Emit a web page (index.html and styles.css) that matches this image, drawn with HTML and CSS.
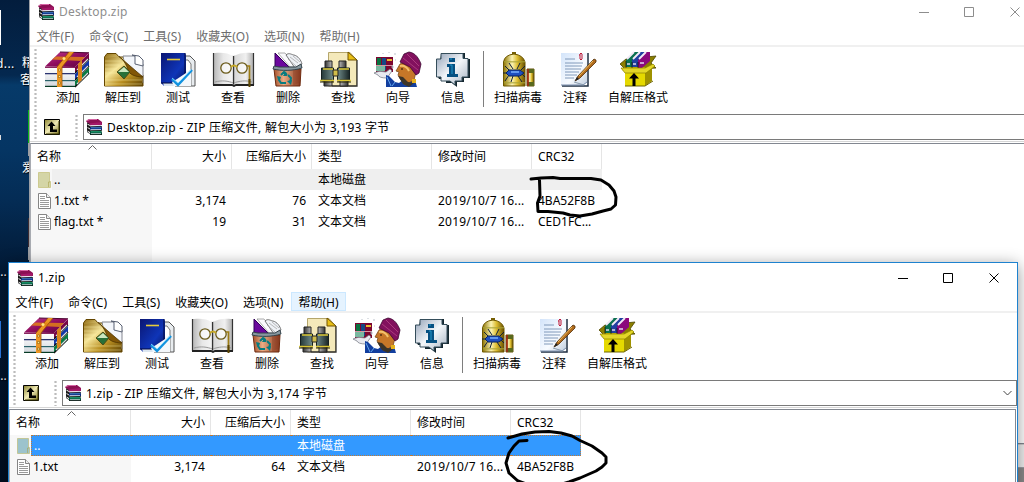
FILE: index.html
```html
<!DOCTYPE html>
<html lang="zh-CN">
<head>
<meta charset="utf-8">
<title>Desktop</title>
<link rel="stylesheet" href="styles.css">
</head>
<body>
<svg class="defs" width="0" height="0">
  <defs>
    <linearGradient id="gold" x1="0" y1="0" x2="1" y2="1"><stop offset="0" stop-color="#8f6a10"/><stop offset=".35" stop-color="#f6e69a"/><stop offset=".65" stop-color="#b98f22"/><stop offset="1" stop-color="#5d4204"/></linearGradient>
    <linearGradient id="plum" x1="0" y1="0" x2="1" y2="1"><stop offset="0" stop-color="#c23a8c"/><stop offset=".5" stop-color="#8e0c5e"/><stop offset="1" stop-color="#5c0540"/></linearGradient>
    <linearGradient id="page" x1="0" y1="0" x2="0" y2="1"><stop offset="0" stop-color="#fff"/><stop offset="1" stop-color="#d4d8de"/></linearGradient>
    <linearGradient id="navy" x1="0" y1="0" x2="1" y2="1"><stop offset="0" stop-color="#0a1672"/><stop offset=".6" stop-color="#0f35b8"/><stop offset="1" stop-color="#071050"/></linearGradient>
    <linearGradient id="sheet" x1="0" y1="0" x2="1" y2="0"><stop offset="0" stop-color="#b4b4b4"/><stop offset=".25" stop-color="#e8e8e8"/><stop offset=".47" stop-color="#f4f4f4"/><stop offset=".5" stop-color="#777"/><stop offset=".54" stop-color="#d8d8d8"/><stop offset=".8" stop-color="#f0f0f0"/><stop offset="1" stop-color="#aaa"/></linearGradient>
    <linearGradient id="copper" x1="0" y1="0" x2="1" y2="0"><stop offset="0" stop-color="#a3512c"/><stop offset=".35" stop-color="#ecac84"/><stop offset="1" stop-color="#84351a"/></linearGradient>
    <linearGradient id="tube" x1="0" y1="0" x2="1" y2="0"><stop offset="0" stop-color="#253838"/><stop offset=".5" stop-color="#7f9c9a"/><stop offset="1" stop-color="#182424"/></linearGradient>
    <linearGradient id="steel" x1="0" y1="0" x2="1" y2="0"><stop offset="0" stop-color="#333"/><stop offset=".5" stop-color="#fff"/><stop offset="1" stop-color="#333"/></linearGradient>
    <linearGradient id="bubble" x1="0" y1="0" x2="1" y2="1"><stop offset="0" stop-color="#94a3b8"/><stop offset=".5" stop-color="#f4f7fa"/><stop offset="1" stop-color="#a5b2c2"/></linearGradient>
    <linearGradient id="can" x1="0" y1="0" x2="1" y2="0"><stop offset="0" stop-color="#8d7300"/><stop offset=".4" stop-color="#fbf3b4"/><stop offset=".65" stop-color="#dcbc30"/><stop offset="1" stop-color="#685000"/></linearGradient>
    <linearGradient id="note" x1="0" y1="0" x2="1" y2="1"><stop offset="0" stop-color="#d3e4fa"/><stop offset=".6" stop-color="#f8fbff"/><stop offset="1" stop-color="#c2cfdf"/></linearGradient>
    <linearGradient id="key" x1="0" y1="0" x2="1" y2="1"><stop offset="0" stop-color="#8a8330"/><stop offset=".5" stop-color="#efe9b4"/><stop offset="1" stop-color="#77701c"/></linearGradient>
  </defs>

  <symbol id="i-books" viewBox="0 0 16 16">
    <path d="M0 2 3 0h9l4 3v3H3z" fill="#8c1054"/><path d="M1 1.500 4 .5h7" stroke="#d766a5" fill="none"/>
    <path d="M3 4.500 15.500 3v3L4 6.500z" fill="#a31868"/>
    <path d="M1 3.500 4 5v10l-3-2z" fill="#1a1a1a"/><path d="M1.500 4.500 4 6v1L1.500 5.700zM1.500 8 4 9.500v1L1.500 9zM1.500 11.500 4 13v1.500l-2.500-2z" fill="#e8e8e8"/>
    <path d="M4 8 15 6.500 16 9v2H4z" fill="#0b2d80"/><path d="M5 8.700h10" stroke="#4b8ddd"/>
    <path d="M4 12 15 11l1 2.500V16H4z" fill="#05533c"/><path d="M5 12.800h10" stroke="#23b880"/>
    <path d="M4.500 6.800H15M4.500 10.700H15M5 14.800h10" stroke="#e9edf0" stroke-width=".9"/>
    <path d="M4 7.700h12M4 11.600h12M4 15.600h12" stroke="#111" stroke-width=".8"/>
  </symbol>
  <symbol id="i-up" viewBox="0 0 16 16">
    <path d="M.5.5h15v15H.5z" fill="url(#key)" stroke="#000"/><path d="M15 2v13H2" fill="none" stroke="#3b3700"/>
    <path d="M7.500 2.500 11.500 7H9v3.500h4V13H6V7H3.500z"/>
  </symbol>
  <symbol id="i-file" viewBox="0 0 13 16">
    <path d="M.5.5h8l4 4v11H.5z" fill="#fff" stroke="#858585"/><path d="M8.500.5v4h4" fill="#eee" stroke="#858585"/>
    <path d="M2 3.500h5M2 5.500h5M2 7.500h9M2 9.500h9M2 11.500h9M2 13.500h9" stroke="#9a9a9a"/>
  </symbol>
  <symbol id="i-folder" viewBox="0 0 13 16">
    <path d="M.5.5h11v9h1v6H.5z" fill="currentColor" stroke="#b9b25c" stroke-opacity=".55"/><path d="M10.500 15V10h1.500" fill="none" stroke="#aaa34e" stroke-opacity=".6"/>
  </symbol>

  <symbol id="i-add" viewBox="0 0 48 37">
    <path d="M31 16 45 2v6L31 22z" fill="#760747"/><path d="M31 23 45 9v6L31 29z" fill="#1237a8"/><path d="M31 30 45 16v7L31 36z" fill="#0b7a43"/>
    <path d="M31 22 45 8M31 29 45 15M31 36 45 22" stroke="#111" stroke-width="1.300"/>
    <path d="M33 19 44 8M33 26 44 15M33 33 44 22" stroke="#d7dce2" stroke-width="1.200"/>
    <path d="M1 15.500 16 1l29 .8L31 16z" fill="url(#plum)"/><path d="m16 1 29 .8" stroke="#4c0833"/>
    <path d="M1 17h30v5H1zM1 24h30v5H1zM1 31h30v4H1z" fill="url(#page)"/>
    <path d="M1 16.300h30" stroke="#7b0d4e" stroke-width="1.200"/><path d="M1 22.700h30" stroke="#121c60" stroke-width="1.200"/><path d="M1 29.700h30" stroke="#115058" stroke-width="1.200"/><path d="M1 35.400h30" stroke="#063c25" stroke-width="1.200"/>
    <path d="M13 16 25 1h5L18 16v20h-5z" fill="#ec9624"/><path d="M8 8.500 12 5.500l29 .5-4 4z" fill="#e08018" opacity=".85"/>
    <path d="M13 16 25 1M18 16 30 1M18 16v20" stroke="#9a5200" fill="none" stroke-width=".8"/>
    <path d="M34 13v19l4-3V9z" fill="#d9831b"/><circle cx="20" cy="7.500" r="1.500" fill="#ffe680"/><path d="M14.500 18h2v2h-2zM14.500 24.500h2v2h-2zM14.500 31h2v2h-2z" fill="#ffe88a" stroke="#7a4c00" stroke-width=".5"/>
  </symbol>
  <symbol id="i-extract" viewBox="0 0 48 37">
    <path d="M5.500 35V6L8 2.500h9L20 6h8l16 18v11z" fill="url(#gold)" stroke="#644600"/>
    <path d="M24 5h12l8 8v19L25 10z" fill="#f3f6fb" stroke="#83858e"/><path d="m33 4 3 1v8l8 2V9l-4-4z" fill="#fff" stroke="#596173"/>
    <path d="M19 5.500C31 9 29 23 44 25L43.500 35H6V7z" fill="url(#gold)"/><path d="M20 5.500 44 26c-8 0-14-3-15-7S25 9 20 5.500" fill="#815607" stroke="#4e3300" stroke-width=".8"/>
    <path d="M6 10h16M6 14h14M6 18h12M6 22h12M6 29h37M6 33h37" stroke="#fff6b0" stroke-opacity=".4"/>
    <path d="m18 21 7-6 6 6-6 7z" fill="#287038" stroke="#4c4e17"/><path d="m19 21 6-5 5 5z" fill="#cbe6be"/>
  </symbol>
  <symbol id="i-test" viewBox="0 0 48 37">
    <path d="M27 5h9l5 5v25H21V9z" fill="#e8ecef" stroke="#555"/><path d="M29 9h5l3 4v22" fill="#fff" stroke="#777"/>
    <path d="M7 2h24l1 2v31H10l-3-3z" fill="url(#navy)"/><path d="M31 2v22" stroke="#02093c"/><path d="M9 32h12v3H10z" fill="#dce6f0"/><path d="M7 32h13" stroke="#03093c"/>
    <path d="M13 8.500h13" stroke="#e6cb3b" stroke-width="1.600"/>
    <path d="m32 22 5-4v17H20l-2-4 5-3z" fill="#f3f7fb"/><path d="m18 28 6 6 14-15" fill="none" stroke="#1192df" stroke-width="2.500"/><path d="m18 27 6 5 13-13" fill="none" stroke="#8edaff" stroke-width=".8"/>
  </symbol>
  <symbol id="i-view" viewBox="0 0 48 37">
    <path d="M4 2h2c7-1 13 0 18.500 3C30 2 37 1 43 2h2v32H27l-2 1-2-1H4z" fill="url(#sheet)"/><path d="M4.500 2v32M44.500 2v32" stroke="#333" stroke-width="1.200"/>
    <path d="M4 34h19l2 1 2-1h18" fill="none" stroke="#222" stroke-width="1.800"/><path d="M6 31c7-2 13-1 18.500 1 6-2 12-3 18.500-1" fill="none" stroke="#999"/>
    <path d="M24.500 5v28" stroke="#333"/><g fill="#fff" fill-opacity=".6" stroke="#6a5a19" stroke-width="1.300"><circle cx="17" cy="17" r="5.200"/><circle cx="33" cy="17" r="5.200"/></g>
    <path d="M22 16q3-3 6 0" fill="none" stroke="#c8aa27" stroke-width="2"/><path d="M38 15h2.500v18" fill="none" stroke="#9d7c15" stroke-width="1.700"/><path d="M39.500 28h2v8h-2z" fill="#5c4604"/>
  </symbol>
  <symbol id="i-delete" viewBox="0 0 48 37">
    <path d="M11 16V2l15 15z" fill="#6b089d" stroke="#310057"/><path d="m14 2 7 0 12 14H26z" fill="#f9f9fc" stroke="#777" stroke-width=".6"/><path d="M22 4c3-3 6 0 8 0 4 1 7 5 8 9l-7 4z" fill="#eef1f6" stroke="#555" stroke-width=".8"/><path d="m26 6 8 6M24 8l8 7M29 5l7 6" stroke="#aaa" stroke-width=".8"/>
    <path d="M10 18h27l-1 17H12z" fill="url(#copper)" stroke="#6c2b10"/><path d="M10 15 9 18c8 2 20 2 29-1l-1-4-5 3H15z" fill="#87979f" stroke="#34434b"/>
    <path d="M29 19h8l-1 12-7 4z" fill="#893d22" opacity=".4"/>
    <g fill="none" stroke="#087c80" stroke-width="2"><path d="m17 24 3-3 3 3M24 24l3 3-1 5M22 32h-5l-2-3 1-3"/></g><path d="m22 20 1 5h-4zM28 29l-5 1 4 4zM13 25l4 1-3 3z" fill="#087c80"/>
  </symbol>
  <symbol id="i-find" viewBox="0 0 48 37">
    <path d="M9.500 1.500H31L37.500 9v26h-28z" fill="#f4e9ba" stroke="#b5a66c"/><path d="M38 9v26H13" fill="none" stroke="#333" stroke-width="1.300"/><path d="M29 1v8h9z" fill="#e8bf16" stroke="#725500"/>
    <path d="M6 10h7v7H6zM20 10h7v7h-7z" fill="url(#steel)" stroke="#222"/><path d="M2.500 17h12v13h-12zM18.500 17h12v13h-12z" fill="url(#tube)" stroke="#152020"/>
    <path d="M14 19h5v6h-5z" fill="#d0bd49" stroke="#222"/><path d="M5 29h8v6H5zM21 29h8v6h-8z" fill="url(#steel)" stroke="#222"/><path d="M1 29.500h14M18 29.500h14M4 18h10M20 18h10" stroke="#dac634" stroke-width="1.300"/><path d="M1 31h14M18 31h14" stroke="#252000"/>
  </symbol>
  <symbol id="i-guide" viewBox="0 0 48 37">
    <path d="M2 6h17v15H2z" fill="#7c0630"/><path d="M3 7h4v12H3z" fill="#0a7340"/><path d="M8 7h4v12H8z" fill="#144884"/><path d="M2 15h9v5H2z" fill="#7ab8a0"/><path d="M13 8h5v2h-5z" fill="#e8bf30"/><path d="M2 14.500h17" stroke="#d497a4"/>
    <path d="M0 22q5-3 12-1l4-3 2 2-5 7q-8 0-9-3l-4-2z" fill="#e9eaf0" stroke="#70747e" stroke-width=".7"/>
    <path d="m12 24 3 1 6 6 4 1 5-4 11 1 2 7H12z" fill="#123e9e"/><path d="m13 26 4 9M21 31l-3 4" stroke="#62a7ef"/>
    <path d="m26 13-4 7 3 1-1 3 3 5 4 5 9-5 3-12-9-8z" fill="#c67728" stroke="#7b4b1c" stroke-width=".8"/><path d="m24 25 5 1 5 5 6 1-5 4-6-3z" fill="#3b3428"/><path d="M26 15q6-1 9 5" fill="none" stroke="#f2c16b" stroke-width="2"/><circle cx="28" cy="18" r=".8"/><path d="M38 28h4v4h-4z" fill="#e5b21c"/>
    <path d="M26 11 30 3l5-2c7 1 10 7 12 12l-2 9-3 2-6-8z" fill="#82115e" stroke="#3b0630" stroke-width=".8"/><path d="m29 7 15 12M33 3l12 12" stroke="#ab3c7e"/>
    <path d="M9 2v1M15 1v1M21 2v2M17 16h3M18.500 14v4M21 9h1" stroke="#aab1bc" stroke-width=".8"/>
  </symbol>
  <symbol id="i-info" viewBox="0 0 48 37">
    <path d="m12 4 3-2h21v6h5v19h-6v4h-7v5l-5-4H17v-4h-7l-2-4z" fill="#14262e"/>
    <path d="M12 2.500h22v5h5V26h-6v4h-7v4l-5-4h-9v-4H7.500V8H12z" fill="url(#bubble)" stroke="#344d5a"/>
    <path d="M20 7h6v4h-6zM18 13h8v10h3v3H18v-3h2v-7h-2z" fill="#075182"/><path d="M21 8h2M21 14h2v9" fill="none" stroke="#2398ca"/>
  </symbol>
  <symbol id="i-virus" viewBox="0 0 48 37">
    <path d="M18 1h4v3h-4z" fill="#776004"/><path d="M9.500 11q1-7 10.500-8 9 1 11 8v24h-21.500z" fill="url(#can)" stroke="#6d5700"/><path d="M10 10h21v1.500H10zM10 31h21v1.500H10z" fill="#a8a438" opacity=".7"/>
    <g fill="none" stroke="#10203c"><path d="m15 19-4-4M19 18l-4-6M23 18l3-6M27 19l4-4M15 24l-4 6M19 25l-2 6M24 25l4 6M27 22l4 4M12 22H9"/></g><path d="m12 22 3-3h11l4 3-4 3H15z" fill="#1d4ec0" stroke="#09235e"/><path d="M17 21h8" stroke="#79b1ff" stroke-width="1.500"/>
    <path d="M33 18h7v17h-7z" fill="url(#can)" stroke="#665108"/><path d="M33 18h7v4h-7zM33 31h7v4h-7z" fill="#59691d"/><path d="M34 18v17" stroke="#a62010" stroke-width="1.500"/>
  </symbol>
  <symbol id="i-note" viewBox="0 0 48 37">
    <path d="M37 2v33H11" fill="none" stroke="#1e2e42" stroke-width="1.500"/><path d="M10 2h26v29l-3 3H10z" fill="url(#note)"/><path d="M10 34h22l4-3" fill="none" stroke="#7b8fae"/>
    <path d="M14 8h10M14 12h18M14 15h17M14 18h16M14 21h14M14 24h12M14 27h9" stroke="#758fb2" stroke-width=".9"/><path d="M31 8V3q-1-2-2 0v5q1 2 2 0M29 4h-1" fill="none" stroke="#bd1635"/>
    <path d="m24 30 3-5L43 8l2 1v2L29 27z" fill="#b16b1d" stroke="#512e08" stroke-width=".8"/><path d="m28 25 14-15" stroke="#f1bd5b"/><path d="m24 30 2-4 2 2z" fill="#222"/><path d="m23 31 10 3" stroke="#889bae"/>
  </symbol>
  <symbol id="i-sfx" viewBox="0 0 48 37">
    <path d="m6 13 6-5 30-3-5 7 5 5-30 2z" fill="#8b7f00" stroke="#4c4500" stroke-width=".8"/><path d="m8 19 3-3h20l-2 5H13z" fill="#c9b900"/>
    <path d="m12 9 8-8h5l-7 15h-6z" fill="#0a7050"/><path d="m18 9 8-8h5l-6 15h-7z" fill="#2040a0"/><path d="m24 9 8-8h4v9l-8 7h-4z" fill="#8b087d"/><path d="m13 8 7-7M19 8l7-7M25 8l7-7" stroke="#f2e9f6" stroke-width="1.800"/><path d="M13 13h3M19 13h3M26 12h4" stroke="#ded6ee" stroke-width="1.500"/><path d="M12 17V10M18 17v-6M24 17v-6" stroke="#111" stroke-width=".8"/>
    <path d="M11 18h20v17H11z" fill="#e5d900"/><path d="m31 18 7-4v16l-7 5z" fill="#9f9200"/><path d="M7 17h24l8-4 2 2-9 7H11z" fill="#e3d728" stroke="#8a8000" stroke-width=".7"/><path d="M11 35h20l8-5" fill="none" stroke="#6d6500"/>
    <path d="m20 22 5 5.500h-3.500V35h-3v-7.500H15z"/>
  </symbol>
</svg>

<main class="desktop">
  <div class="wallpaper">
    <i class="bit bit-white"></i><i class="bit bit-dot"></i><i class="bit bit-green"></i><i class="bit bit-gray"></i><i class="bit bit-brown"></i><i class="bit bit-gray2"></i><i class="bit bit-blue"></i>
    <span class="cap cap-d">d...</span><span class="cap cap-a">精</span><span class="cap cap-b">客</span><span class="cap cap-c">爱</span><span class="cap cap-e">...</span><span class="cap cap-f">...</span>
  </div>

  <section class="window back">
    <header class="titlebar">
      <svg class="i16"><use href="#i-books"/></svg><span class="title">Desktop.zip</span>
      <svg class="controls" viewBox="0 0 110 12"><path d="M0 6.500h10M45.500 1.500h9v9h-9zM91.500 1.500l9 9M100.500 1.500l-9 9"/></svg>
    </header>
    <nav class="menu"><span>文件(F)</span><span>命令(C)</span><span>工具(S)</span><span>收藏夹(O)</span><span>选项(N)</span><span>帮助(H)</span></nav>
    <div class="bars">
      <div class="toolbar">
        <div class="tool"><svg><use href="#i-add"/></svg>添加</div>
        <div class="tool"><svg><use href="#i-extract"/></svg>解压到</div>
        <div class="tool"><svg><use href="#i-test"/></svg>测试</div>
        <div class="tool"><svg><use href="#i-view"/></svg>查看</div>
        <div class="tool"><svg><use href="#i-delete"/></svg>删除</div>
        <div class="tool"><svg><use href="#i-find"/></svg>查找</div>
        <div class="tool"><svg><use href="#i-guide"/></svg>向导</div>
        <div class="tool"><svg><use href="#i-info"/></svg>信息</div>
        <div class="divider"></div>
        <div class="tool w60"><svg><use href="#i-virus"/></svg>扫描病毒</div>
        <div class="tool w54"><svg><use href="#i-note"/></svg>注释</div>
        <div class="tool w72"><svg><use href="#i-sfx"/></svg>自解压格式</div>
      </div>
      <div class="address">
        <svg class="i16"><use href="#i-up"/></svg><i class="grip"></i>
        <div class="path"><svg class="i16"><use href="#i-books"/></svg><span>Desktop.zip - ZIP 压缩文件, 解包大小为 3,193 字节</span></div>
      </div>
    </div>
    <div class="list">
      <div class="row head"><span>名称<svg class="sort" viewBox="0 0 9 5"><path d="m.5 4.500 4-4 4 4"/></svg></span><span class="r">大小</span><span class="r">压缩后大小</span><span>类型</span><span>修改时间</span><span>CRC32</span></div>
      <div class="row parent"><span class="name"><svg class="fi"><use href="#i-folder"/></svg><b>..</b></span><span></span><span></span><span>本地磁盘</span><span></span><span></span></div>
      <div class="row"><span class="name"><svg class="fi"><use href="#i-file"/></svg><b>1.txt *</b></span><span class="r">3,174</span><span class="r">76</span><span>文本文档</span><span class="date">2019/10/7 16...</span><span class="crc">4BA52F8B</span></div>
      <div class="row"><span class="name"><svg class="fi"><use href="#i-file"/></svg><b>flag.txt *</b></span><span class="r">19</span><span class="r">31</span><span>文本文档</span><span class="date">2019/10/7 16...</span><span class="crc">CED1FC...</span></div>
      <div class="fill"></div>
    </div>
    <footer class="status"></footer>
  </section>

  <section class="window front">
    <header class="titlebar">
      <svg class="i16"><use href="#i-books"/></svg><span class="title">1.zip</span>
      <svg class="controls" viewBox="0 0 110 12"><path d="M0 6.500h10M45.500 1.500h9v9h-9zM91.500 1.500l9 9M100.500 1.500l-9 9"/></svg>
    </header>
    <nav class="menu"><span>文件(F)</span><span>命令(C)</span><span>工具(S)</span><span>收藏夹(O)</span><span>选项(N)</span><span class="hot">帮助(H)</span></nav>
    <div class="bars">
      <div class="toolbar">
        <div class="tool"><svg><use href="#i-add"/></svg>添加</div>
        <div class="tool"><svg><use href="#i-extract"/></svg>解压到</div>
        <div class="tool"><svg><use href="#i-test"/></svg>测试</div>
        <div class="tool"><svg><use href="#i-view"/></svg>查看</div>
        <div class="tool"><svg><use href="#i-delete"/></svg>删除</div>
        <div class="tool"><svg><use href="#i-find"/></svg>查找</div>
        <div class="tool"><svg><use href="#i-guide"/></svg>向导</div>
        <div class="tool"><svg><use href="#i-info"/></svg>信息</div>
        <div class="divider"></div>
        <div class="tool w60"><svg><use href="#i-virus"/></svg>扫描病毒</div>
        <div class="tool w54"><svg><use href="#i-note"/></svg>注释</div>
        <div class="tool w72"><svg><use href="#i-sfx"/></svg>自解压格式</div>
      </div>
      <div class="address">
        <svg class="i16"><use href="#i-up"/></svg><i class="grip"></i>
        <div class="path"><svg class="i16"><use href="#i-books"/></svg><span>1.zip - ZIP 压缩文件, 解包大小为 3,174 字节</span><svg class="drop" viewBox="0 0 9 6"><path d="m.5 1 4 4 4-4"/></svg></div>
      </div>
    </div>
    <div class="list">
      <div class="row head"><span>名称<svg class="sort" viewBox="0 0 9 5"><path d="m.5 4.500 4-4 4 4"/></svg></span><span class="r">大小</span><span class="r">压缩后大小</span><span>类型</span><span>修改时间</span><span>CRC32</span></div>
      <div class="row parent selected"><span class="name"><svg class="fi"><use href="#i-folder"/></svg><b>..</b></span><span></span><span></span><span>本地磁盘</span><span></span><span></span></div>
      <div class="row"><span class="name"><svg class="fi"><use href="#i-file"/></svg><b>1.txt</b></span><span class="r">3,174</span><span class="r">64</span><span>文本文档</span><span class="date">2019/10/7 16...</span><span class="crc">4BA52F8B</span></div>
      <div class="fill"></div>
    </div>
    <footer class="status"></footer>
  </section>

  <svg class="ink" viewBox="0 0 1024 482">
    <path d="M531 179 541 178 553 177.500 560 178.500H591L601 180 609 185 614 191 616 197 615.500 205 611 209 603 211 592 214 580 216 570 215 563 213 548 211.500 538 211.500 537.500 203 540 196 539.500 180"/>
    <path d="M527 440.500 519 441 514 446 509 453 506 463 509 473 518 481 532 486H555L569 482 580 478 596 471 602 467 606 463 606 457 602 453 592 446 580 440.500 572 436 561 433 549 431.500 535 432 522 434 508 438"/>
  </svg>
</main>
</body>
</html>
```
FILE: styles.css
```css
* { box-sizing: border-box; }
body { margin: 0; font: 12px/16px "Noto Sans", "Noto Sans CJK SC", sans-serif; color: #000; }
svg { display: block; flex: none; }
.defs { position: absolute; }
.desktop { position: relative; width: 1024px; height: 482px; overflow: hidden; background: #8b8b8b; }

.wallpaper { position: absolute; left: 0; top: 0; width: 31px; height: 482px; overflow: hidden; background: linear-gradient(#031d3d 0, #04284f 75px, #063a69 85px, #053563 150px, #042c55 200px, #021a36 270px, #010e20 482px); }
.bit { position: absolute; }
.bit-white { left: 0; top: 10px; width: 1px; height: 35px; background: #fff; }
.bit-dot { left: 0; top: 135px; width: 1px; height: 5px; background: #ddd; }
.bit-green { left: 28px; top: 110px; width: 2px; height: 33px; background: #0ab414; }
.bit-gray { left: 28px; top: 143px; width: 2px; height: 13px; background: #9b9da0; }
.bit-brown { left: 28px; top: 218px; width: 2px; height: 29px; background: #3d2c32; }
.bit-gray2 { left: 28px; top: 247px; width: 2px; height: 13px; background: #9b9da0; }
.bit-blue { left: 0; top: 321px; width: 1px; height: 37px; background: #2a7be8; }
.cap { position: absolute; color: #fff; line-height: 16px; text-shadow: 1px 1px 1px #000; }
.cap-d { left: -4px; top: 56px; letter-spacing: .4px; }
.cap-a { left: 22px; top: 55px; }
.cap-b { left: 20px; top: 72px; }
.cap-c { left: 22px; top: 160px; }
.cap-e, .cap-f { left: -3px; top: 264px; }
.cap-f { top: 368px; }

.window { position: absolute; width: 1010px; height: 472px; display: flex; flex-direction: column; background: #fff; border: 1px solid; }
.back { left: 29px; top: -4px; border-color: #9c9fa5; }
.front { left: 8px; top: 262px; border-color: #1e82cf; box-shadow: 0 3px 15px rgba(0, 0, 0, .42); }

.titlebar { height: 29px; display: flex; align-items: center; padding-left: 8px; }
.i16 { width: 16px; height: 16px; }
.title { margin-left: 5px; letter-spacing: .25px; }
.controls { width: 110px; height: 12px; margin-left: auto; margin-right: 9px; fill: none; stroke: #000; }
.back .controls { stroke: #8d8d8d; }
.back .title { color: #8e8e8e; }
.menu { height: 19px; display: flex; align-items: center; margin-left: -1px; }
.menu span { height: 19px; line-height: 19px; padding: 0 6.600px; border: 1px solid transparent; white-space: nowrap; }
.back .menu { color: #6d6d6d; }
.menu .hot { background: #e5f3ff; border-color: #cce8ff; }

.bars { position: relative; border-top: 2px solid #f0f0f0; height: 97px; display: flex; flex-direction: column; border-bottom: 1px solid #d6d6d6; }
.bars::before, .grip { background: radial-gradient(circle, #bcbcbc 1px, transparent 1.300px) 0 0 / 3px 4px; }
.bars::before { content: ""; position: absolute; left: 4px; top: 1px; width: 3px; height: 92px; }
.toolbar { height: 66px; display: flex; padding: 4px 0 0 10.500px; }
.tool { width: 55px; display: flex; flex-direction: column; align-items: center; line-height: 20px; white-space: nowrap; }
.tool svg { width: 48px; height: 37px; }
.w60 { width: 60px; }
.w54 { width: 54px; }
.w72 { width: 72px; }
.divider { width: 1px; height: 56px; background: #7e7e7e; margin: 0 4px 0 2.500px; }
.address { display: flex; align-items: center; height: 28px; padding-left: 14px; }
.grip { width: 3px; height: 26px; margin: 0 5px 0 15px; }
.path { flex: 1; height: 26px; border: 1px solid #7a7a7a; display: flex; align-items: center; padding: 0 4px 0 2px; }
.path span { margin-left: 5px; padding-top: 1px; flex: 1; letter-spacing: .26px; white-space: nowrap; }
.drop { width: 9px; height: 6px; fill: none; stroke: #444; }

.list { flex: 1; display: flex; flex-direction: column; margin: 1px 1px 0 0; border: 1px solid #828790; border-left-color: #a8abb1; }
.row { display: grid; grid-template-columns: 121px 80px 80px 120px 100px 70px; width: 571px; height: 21px; line-height: 21px; }
.row > span { padding-left: 6px; white-space: nowrap; }
.row > .r { text-align: right; padding: 0 6px 0 0; }
.row > .date { letter-spacing: .2px; }
.head { height: 25px; line-height: 25px; }
.head > span { position: relative; border-right: 1px solid #e5e5e5; }
.head > .r { padding-right: 5px; }
.sort { position: absolute; left: 57px; top: 1px; width: 9px; height: 5px; fill: none; stroke: #666; }
.row > .name { display: flex; align-items: center; padding-left: 7px; background: #f7f7f7; }
.name b { font-weight: 400; flex: 1; height: 21px; margin-left: 1px; padding-left: 2px; }
.fi { width: 13px; height: 16px; color: #d4d5a6; }
.parent > span:not(.name), .parent b { background: #efefef; }
.selected { color: #fff; }
.selected .fi { color: #9cc3cc; }
.selected > span:not(.name), .selected b { background: #39f; border-top: 1px dotted #c27a32; border-bottom: 1px dotted #c27a32; line-height: 19px; }
.selected b { border-left: 1px dotted #c27a32; }
.selected > span:last-child { border-right: 1px dotted #c27a32; }
.fill { flex: 1; width: 121px; background: #f7f7f7; }
.status { height: 23px; border-top: 1px solid #ccc; background: #f0f0f0; }

.ink { position: absolute; left: 0; top: 0; width: 1024px; height: 482px; fill: none; stroke: #000; stroke-width: 3; stroke-linecap: round; stroke-linejoin: round; }
```
